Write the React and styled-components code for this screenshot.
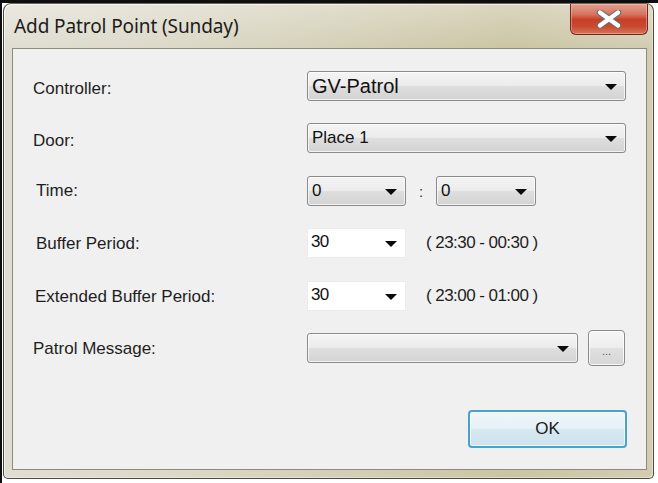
import React from "react";
import styled, { createGlobalStyle } from "styled-components";

const GlobalStyle = createGlobalStyle`
  html, body { margin: 0; padding: 0; background: #ffffff; }
  body { font-family: "Liberation Sans", Arial, sans-serif; }
`;

const Screen = styled.div`
  width: 658px;
  height: 483px;
  box-sizing: border-box;
  border-top: 3px solid #0e0e0e;
  border-left: 2px solid #0e0e0e;
  background: #ffffff;
  overflow: hidden;
`;

const Window = styled.div`
  width: 651px;
  height: 476px;
  box-sizing: border-box;
  margin-left: 1px;
  border: 1px solid #4a4a42;
  border-top-color: #6a685c;
  border-radius: 8px 8px 5px 5px;
  background:
    linear-gradient(180deg, rgba(255,255,255,0.3) 0%, rgba(255,255,255,0) 45px),
    linear-gradient(90deg, #e0ded3 0%, #dcd9c8 25%, #d4d0b8 50%, #cbc5a3 78%, #d2cdb2 100%);
  display: flex;
  flex-direction: column;
  box-shadow: inset 1px 1px 0 rgba(255,255,255,0.6), inset -1px -1px 0 rgba(255,255,255,0.4);
`;

const TitleBar = styled.div`
  height: 44px;
  display: flex;
  align-items: flex-start;
  padding-left: 10px;
  padding-right: 5px;
`;

const Title = styled.div`
  font-family: "Noto Sans", "Open Sans", sans-serif;
  font-size: 19px;
  color: #1b1b1b;
  padding-top: 9px;
  letter-spacing: -0.1px;
`;

const CloseButton = styled.div`
  margin-left: auto;
  width: 78px;
  height: 31px;
  box-sizing: border-box;
  border: 1px solid #6d2a1e;
  border-top: none;
  border-radius: 0 0 6px 6px;
  background: linear-gradient(180deg, #e3a191 0%, #d6735d 35%, #c83f26 52%, #c94a30 75%, #d8735a 100%);
  box-shadow: inset 0 0 0 1px rgba(255, 200, 180, 0.45);
  display: flex;
  align-items: center;
  justify-content: center;
`;

const Client = styled.div`
  flex: 1;
  margin: 0 6px 8px 8px;
  border: 1px solid #8e8b7c;
  background: #f0f0f0;
  padding: 22px 18px 21px 20px;
  display: flex;
  flex-direction: column;
`;

const Row = styled.div`
  display: flex;
  align-items: center;
  height: 30px;
  margin-bottom: 22.4px;
`;

const Label = styled.div`
  width: 274px;
  padding-left: ${(p) => p.$indent || 0}px;
  padding-top: ${(p) => p.$drop ?? 5}px;
  box-sizing: border-box;
  font-size: 17px;
  color: #1e1e1e;
`;

const Combo = styled.div`
  position: relative;
  width: ${(p) => p.$w}px;
  height: 30px;
  box-sizing: border-box;
  border: 1px solid #8a8a8a;
  border-radius: 3px;
  background: linear-gradient(180deg, #f4f4f4 0%, #ececec 48%, #dedede 52%, #d3d3d3 100%);
  box-shadow: inset 0 0 0 1px rgba(255,255,255,0.7);
  display: flex;
  align-items: center;
  padding-left: 4px;
  font-size: ${(p) => p.$fs || 17}px;
  color: #111;
`;

const WhiteCombo = styled.div`
  position: relative;
  width: 99px;
  height: 30px;
  box-sizing: border-box;
  border: 1px solid #ececec;
  background: #ffffff;
  display: flex;
  align-items: center;
  padding-left: 3px;
  padding-bottom: 2px;
  font-size: 17px;
  letter-spacing: -0.6px;
  color: #111;
`;

const Arrow = styled.span`
  position: absolute;
  right: 8px;
  top: 50%;
  margin-top: -2px;
  width: 0;
  height: 0;
  border-left: 6px solid transparent;
  border-right: 6px solid transparent;
  border-top: 6px solid #0a0a0a;
`;

const Colon = styled.div`
  width: 30px;
  text-align: center;
  font-size: 15px;
  color: #333;
  padding-top: 2px;
`;

const Range = styled.div`
  margin-left: 20px;
  font-size: 17px;
  letter-spacing: -0.55px;
  color: #1e1e1e;
`;

const MoreButton = styled.div`
  margin-left: 10px;
  width: 37px;
  height: 36px;
  box-sizing: border-box;
  border: 1px solid #8a8a8a;
  border-radius: 4px;
  background: linear-gradient(180deg, #f6f6f6 0%, #eeeeee 48%, #e0e0e0 52%, #d6d6d6 100%);
  box-shadow: inset 0 0 0 1px rgba(255,255,255,0.8);
  display: flex;
  align-items: center;
  justify-content: center;
  padding-top: 6px;
  font-size: 11px;
  color: #555;
`;

const Footer = styled.div`
  margin-top: auto;
  display: flex;
  justify-content: flex-end;
`;

const OkButton = styled.div`
  width: 159px;
  height: 38px;
  margin-right: 1px;
  box-sizing: border-box;
  border: 2px solid #47a3cb;
  border-radius: 4px;
  background: linear-gradient(180deg, #eef6fa 0%, #e6f1f7 48%, #d6e8f0 52%, #cde3ed 100%);
  box-shadow: inset 0 0 0 1px rgba(255,255,255,0.8);
  display: flex;
  align-items: center;
  justify-content: center;
  font-size: 17px;
  color: #1a1a1a;
`;

function CloseX() {
  return (
    <svg width="26" height="18" viewBox="0 0 26 18">
      <path d="M4 2.5 L22 15.5 M22 2.5 L4 15.5" stroke="#707070" strokeWidth="6.5" strokeLinecap="round" />
      <path d="M4 2.5 L22 15.5 M22 2.5 L4 15.5" stroke="#ffffff" strokeWidth="4.2" strokeLinecap="round" />
    </svg>
  );
}

export default function App() {
  return (
    <>
      <GlobalStyle />
      <Screen>
        <Window>
          <TitleBar>
            <Title>Add Patrol Point (Sunday)</Title>
            <CloseButton>
              <CloseX />
            </CloseButton>
          </TitleBar>
          <Client>
            <Row>
              <Label $drop={6}>Controller:</Label>
              <Combo $w={319} $fs={20}>
                GV-Patrol
                <Arrow />
              </Combo>
            </Row>
            <Row>
              <Label $drop={6}>Door:</Label>
              <Combo $w={319}>
                Place 1
                <Arrow />
              </Combo>
            </Row>
            <Row>
              <Label $indent={3} $drop={1}>Time:</Label>
              <Combo $w={99}>
                0
                <Arrow />
              </Combo>
              <Colon>:</Colon>
              <Combo $w={100}>
                0
                <Arrow />
              </Combo>
            </Row>
            <Row>
              <Label $indent={3} $drop={2}>Buffer Period:</Label>
              <WhiteCombo>
                30
                <Arrow />
              </WhiteCombo>
              <Range>( 23:30 - 00:30 )</Range>
            </Row>
            <Row>
              <Label $indent={2} $drop={3}>Extended Buffer Period:</Label>
              <WhiteCombo>
                30
                <Arrow />
              </WhiteCombo>
              <Range>( 23:00 - 01:00 )</Range>
            </Row>
            <Row>
              <Label $drop={3}>Patrol Message:</Label>
              <Combo $w={271}>
                <Arrow />
              </Combo>
              <MoreButton>...</MoreButton>
            </Row>
            <Footer>
              <OkButton>OK</OkButton>
            </Footer>
          </Client>
        </Window>
      </Screen>
    </>
  );
}
